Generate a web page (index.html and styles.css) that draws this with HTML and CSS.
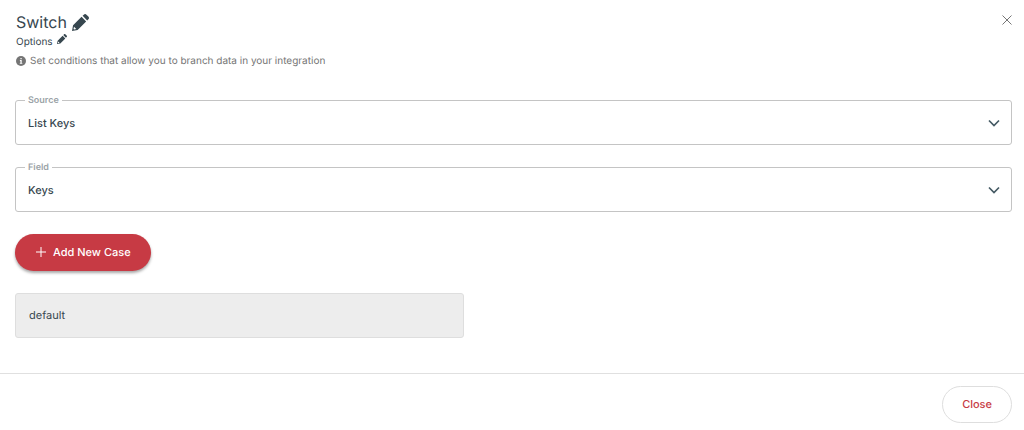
FILE: index.html
```html
<!DOCTYPE html>
<html lang="en">
<head>
<meta charset="utf-8">
<meta name="viewport" content="width=device-width, initial-scale=1">
<title>Switch</title>
<link rel="stylesheet" href="styles.css">
</head>
<body>
<main class="dialog">
  <header class="header">
    <div class="heading">
      <div class="title-row">
        <h1 class="title">Switch</h1>
        <button class="icon-button" type="button" aria-label="Edit name">
          <svg class="pencil" viewBox="0 0 16 16" aria-hidden="true"><path d="M0 16l1-5.3L9 2.7l4.3 4.3-8 8zM10 1.7l1.1-1.1c.8-.8 1.8-.7 2.5 0l1.8 1.8c.8.8.8 1.8 0 2.5L14.3 6z"/><path class="pencil-gap" d="M1.9 12l2.1 2-2 .6-.6-.6z"/></svg>
        </button>
      </div>
      <div class="options-row">
        <span>Options</span>
        <button class="icon-button" type="button" aria-label="Edit options">
          <svg class="pencil pencil-small" viewBox="0 0 16 16" aria-hidden="true"><path d="M0 16l1-5.3L9 2.7l4.3 4.3-8 8zM10 1.7l1.1-1.1c.8-.8 1.8-.7 2.5 0l1.8 1.8c.8.8.8 1.8 0 2.5L14.3 6z"/><path class="pencil-gap" d="M1.9 12l2.1 2-2 .6-.6-.6z"/></svg>
        </button>
      </div>
      <p class="hint">
        <svg class="info" viewBox="0 0 10 10" aria-hidden="true"><circle cx="5" cy="5" r="5"/><path class="info-mark" d="M4.4 2h1.3v1.2H4.4zM3.9 4.1h1.8v2.8h.6v.9H3.8v-.9h.6V5h-.5z"/></svg>
        <span>Set conditions that allow you to branch data in your integration</span>
      </p>
    </div>
    <button class="icon-button" type="button" aria-label="Dismiss">
      <svg class="cross" viewBox="0 0 10 10" aria-hidden="true"><path d="M.5.5l9 9M9.5.5l-9 9"/></svg>
    </button>
  </header>
  <form class="form">
    <div class="field">
      <label class="field-label" for="source">Source</label>
      <select class="field-select" id="source"><option>List Keys</option></select>
      <svg class="chevron" viewBox="0 0 12 8" aria-hidden="true"><path d="M1 1.5l5 5 5-5"/></svg>
    </div>
    <div class="field">
      <label class="field-label" for="field">Field</label>
      <select class="field-select" id="field"><option>Keys</option></select>
      <svg class="chevron" viewBox="0 0 12 8" aria-hidden="true"><path d="M1 1.5l5 5 5-5"/></svg>
    </div>
    <button class="add-button" type="button">
      <svg class="plus" viewBox="0 0 10 10" aria-hidden="true"><path d="M5 0v10M0 5h10"/></svg>
      <span>Add New Case</span>
    </button>
    <input class="case-name" type="text" value="default" aria-label="Case name" readonly>
  </form>
  <footer class="footer">
    <button class="close-button" type="button">Close</button>
  </footer>
</main>
</body>
</html>
```
FILE: styles.css
```css
* {
  box-sizing: border-box;
}

body {
  margin: 0;
  background: #fff;
  color: #37474f;
  font-family: Inter, "Liberation Sans", sans-serif;
  font-size: 11px;
  text-rendering: geometricPrecision;
}

button,
input,
select {
  font: inherit;
  color: inherit;
  text-rendering: inherit;
}

.header {
  display: flex;
  justify-content: space-between;
  align-items: flex-start;
  padding: 11px 12px 0 16px;
}

.title-row {
  display: flex;
  align-items: center;
  gap: 5px;
}

.title {
  margin: 0;
  font-size: 16px;
  font-weight: 400;
  line-height: 22px;
}

.options-row {
  display: flex;
  align-items: flex-start;
  gap: 4px;
  margin-top: 1px;
  font-size: 10px;
  line-height: 16px;
}

.icon-button {
  display: flex;
  padding: 0;
  border: 0;
  background: none;
  cursor: pointer;
}

.pencil {
  width: 17px;
  height: 17px;
  fill: #37474f;
}

.pencil-small {
  width: 10px;
  height: 10px;
}

.pencil-gap {
  fill: #fff;
}

.hint {
  display: flex;
  align-items: center;
  gap: 4px;
  margin: 3px 0 0;
  color: #757575;
  font-size: 10px;
  line-height: 16px;
}

.info {
  width: 10px;
  height: 10px;
  fill: #757575;
}

.info-mark {
  fill: #fff;
}

.cross {
  width: 10px;
  height: 10px;
  margin-top: 4px;
  fill: none;
  stroke: #757575;
  stroke-width: 1;
}

.form {
  display: flex;
  flex-direction: column;
  align-items: flex-start;
  gap: 22px;
  padding: 31px 12px 35px 15px;
}

.field {
  position: relative;
  width: 100%;
}

.field-label {
  position: absolute;
  top: -5px;
  left: 10px;
  padding: 0 3px;
  background: #fff;
  color: #9ba3a7;
  font-size: 9px;
  font-weight: 600;
  line-height: 12px;
}

.field-select {
  display: block;
  width: 100%;
  height: 45px;
  padding: 0 32px 0 12px;
  appearance: none;
  border: 1px solid #c4c4c4;
  border-radius: 3px;
  background: #fff;
  font-weight: 500;
}

.chevron {
  position: absolute;
  top: 19px;
  right: 12px;
  width: 12px;
  height: 8px;
  fill: none;
  stroke: #455a64;
  stroke-width: 1.7;
  pointer-events: none;
}

.add-button {
  display: flex;
  align-items: center;
  gap: 7px;
  height: 37px;
  padding: 0 20px 1px 21px;
  border: 0;
  border-radius: 19px;
  background: #c73a44;
  box-shadow: 0 2px 3px rgba(0, 0, 0, 0.35);
  color: #fff;
  font-weight: 500;
}

.plus {
  width: 10px;
  height: 10px;
  fill: none;
  stroke: #fff;
  stroke-width: 1;
}

.case-name {
  width: 45%;
  height: 45px;
  padding: 0 13px 1px;
  border: 1px solid #dedede;
  border-radius: 3px;
  background: #ededed;
}

.footer {
  display: flex;
  justify-content: flex-end;
  padding: 12px 12px 7px;
  border-top: 1px solid #e0e0e0;
}

.close-button {
  height: 37px;
  padding: 0 19px 1px;
  border: 1px solid #dedede;
  border-radius: 19px;
  background: #fff;
  color: #c73a44;
  font-weight: 500;
}
```
